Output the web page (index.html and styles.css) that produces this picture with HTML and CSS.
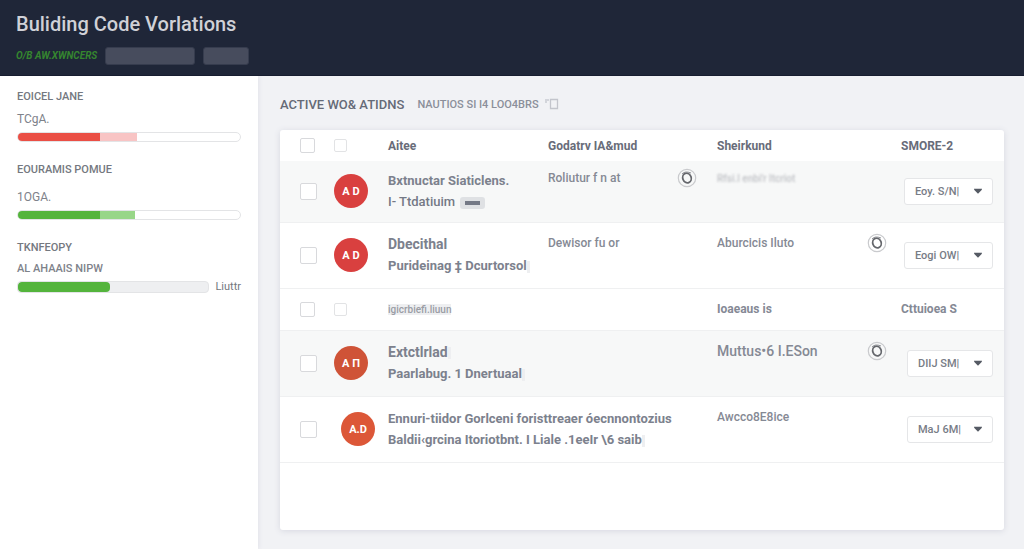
FILE: index.html
```html
<!DOCTYPE html>
<html lang="en">
<head>
<meta charset="utf-8">
<meta name="viewport" content="width=device-width, initial-scale=1">
<title>Buliding Code Vorlations</title>
<link rel="stylesheet" href="styles.css">
</head>
<body>
<svg width="0" height="0" class="sprite" aria-hidden="true">
  <symbol id="ring" viewBox="0 0 20 20">
    <circle cx="10" cy="10" r="8.7" fill="none" stroke="#c9cacd" stroke-width="1.2"/>
    <ellipse cx="10" cy="10" rx="4.2" ry="5" fill="none" stroke="#65676c" stroke-width="1.800" transform="rotate(-20 10 10)"/>
    <path d="M5 6Q8 2.600 14 5" fill="none" stroke="#8d8f94" stroke-width="1"/>
  </symbol>
  <symbol id="caret" viewBox="0 0 10 6">
    <path d="M1 .8H9Q9 1.800 8.200 2.500L5 5.700 1.800 2.500Q1 1.800 1 .8Z" fill="#555a64"/>
  </symbol>
</svg>
<header class="topbar">
  <h1 class="title">Buliding Code Vorlations</h1>
  <div class="subline"><span class="status">O/B AW.XWNCERS</span><span class="pill pill-wide"></span><span class="pill"></span></div>
</header>
<div class="layout">
  <aside class="sidebar">
    <section class="meter">
      <h2 class="meter-title">EOICEL JANE</h2>
      <p class="meter-label">TCgA.</p>
      <div class="bar"><span class="fill red" style="width:37%"></span><span class="fill pink" style="width:16.500%"></span></div>
    </section>
    <section class="meter">
      <h2 class="meter-title">EOURAMIS POMUE</h2>
      <p class="meter-label">1OGA.</p>
      <div class="bar"><span class="fill green" style="width:37%"></span><span class="fill mint" style="width:15.500%"></span></div>
    </section>
    <section class="meter">
      <h2 class="meter-title">TKNFEOPY</h2>
      <p class="meter-label small">AL AHAAIS NIPW</p>
      <div class="bar-row"><div class="bar solid"><span class="fill green round" style="width:48.500%"></span></div><span class="bar-end">Liuttr</span></div>
    </section>
  </aside>
  <main class="main">
    <div class="heading">
      <h2 class="heading-title">ACTIVE WO&amp; ATIDNS</h2>
      <span class="heading-sub">NAUTIOS SI I4 LOO4BRS</span>
      <svg class="heading-icon" viewBox="0 0 14 12" aria-hidden="true"><path d="M1 1v4M3 1v2M5.500 1.500h7v9h-7z" fill="none" stroke="#c3c5cc" stroke-width="1.300"/></svg>
    </div>
    <div class="card">
      <table class="grid">
        <colgroup><col class="c-check"><col class="c-avatar"><col class="c-name"><col class="c-detail"><col><col class="c-action"></colgroup>
        <thead>
          <tr>
            <th><input type="checkbox" class="box" aria-label="Select all"></th>
            <th><input type="checkbox" class="box tiny" aria-label="Select group"></th>
            <th scope="col">Aitee</th>
            <th scope="col">Godatrv IA&amp;mud</th>
            <th scope="col">Sheirkund</th>
            <th scope="col">SMORE-2</th>
          </tr>
        </thead>
        <tbody>
          <tr class="item first shaded">
            <td><input type="checkbox" class="box large" aria-label="Select row 1"></td>
            <td><span class="avatar">A D</span></td>
            <td><div class="name">Bxtnuctar Siaticlens.</div><div class="kind">I- Ttdatiuim <span class="tag"></span></div></td>
            <td class="top"><div class="detail"><span>Roliutur f n at</span><svg class="ring"><use href="#ring"/></svg></div></td>
            <td class="top"><span class="faded">Rfsi.l enbi'r ltcriot</span></td>
            <td class="act"><div class="picker"><select aria-label="Action for row 1"><option>Eoy. S/N|</option></select><svg class="caret"><use href="#caret"/></svg></div></td>
          </tr>
          <tr class="item">
            <td><input type="checkbox" class="box large" aria-label="Select row 2"></td>
            <td><span class="avatar">A D</span></td>
            <td><div class="name big">Dbecithal</div><div class="name">Purideinag ‡ Dcurtorsol<span class="smudge"></span></div></td>
            <td class="top">Dewisor fu or</td>
            <td class="top"><div class="detail near"><span>Aburcicis Iluto</span><svg class="ring"><use href="#ring"/></svg></div></td>
            <td class="act"><div class="picker"><select aria-label="Action for row 2"><option>Eogi OW|</option></select><svg class="caret"><use href="#caret"/></svg></div></td>
          </tr>
          <tr class="group">
            <td><input type="checkbox" class="box" aria-label="Select second group"></td>
            <td><input type="checkbox" class="box tiny" aria-label="Select subgroup"></td>
            <td colspan="2"><span class="ghost">igicrbiefi.liuun</span></td>
            <td>Ioaeaus is</td>
            <td>Cttuioea S</td>
          </tr>
          <tr class="item shaded">
            <td><input type="checkbox" class="box large" aria-label="Select row 3"></td>
            <td><span class="avatar rust">A П</span></td>
            <td><div class="name big">Extctlrlad<span class="smudge"></span></div><div class="name">Paarlabug. 1 Dnertuaal<span class="smudge"></span></div></td>
            <td></td>
            <td class="top"><div class="detail near large-text"><span>Muttus•6 I.ESon</span><svg class="ring"><use href="#ring"/></svg></div></td>
            <td class="act"><div class="picker narrow"><select aria-label="Action for row 3"><option>DIIJ SM|</option></select><svg class="caret"><use href="#caret"/></svg></div></td>
          </tr>
          <tr class="item">
            <td><input type="checkbox" class="box large" aria-label="Select row 4"></td>
            <td><span class="avatar orange">A.D</span></td>
            <td colspan="2"><div class="name">Ennuri-tiidor Gorlceni foristtreaer óecnnontozius</div><div class="name">Baldii‹grcina Itoriotbnt. I Liale .1eeIr \6 saib<span class="smudge"></span></div></td>
            <td class="top">Awcco8E8ice</td>
            <td class="act"><div class="picker narrow"><select aria-label="Action for row 4"><option>MaJ 6M|</option></select><svg class="caret"><use href="#caret"/></svg></div></td>
          </tr>
        </tbody>
      </table>
    </div>
  </main>
</div>
</body>
</html>
```

FILE: styles.css
```css
* { box-sizing: border-box; }
body {
  margin: 0;
  min-height: 100vh;
  display: flex;
  flex-direction: column;
  font-family: Roboto, "Noto Sans", sans-serif;
  font-size: 12px;
  color: #747986;
  background: #f1f2f5;
}
h1, h2, p { margin: 0; }
.sprite { position: absolute; }

.topbar {
  position: relative;
  z-index: 1;
  height: 76px;
  padding: 12px 16px;
  background: #1f2638;
  border-bottom: 1px solid #171d30;
}
.title {
  font-size: 20px;
  line-height: 24px;
  font-weight: 500;
  color: #d0d1d7;
}
.subline { display: flex; align-items: center; gap: 8px; margin-top: 11px; }
.status {
  width: 81px;
  font-size: 10px;
  line-height: 18px;
  font-weight: 700;
  font-style: italic;
  color: #35852f;
  white-space: nowrap;
}
.pill {
  width: 46px;
  height: 18px;
  border-radius: 3px;
  background: #474c5d;
  border: 1px solid #363c4e;
}
.pill-wide { width: 90px; }

.layout { flex: 1; display: flex; }
.sidebar {
  flex: 0 0 258px;
  padding: 13px 17px;
  background: #fff;
  box-shadow: 1px 0 4px #e2e2ea;
}
.meter { margin-bottom: 20px; }
.meter-title { font-size: 11px; line-height: 16px; font-weight: 500; color: #747880; }
.meter-label { font-size: 12px; line-height: 16px; margin: 6px 0 5px; color: #7e828a; }
.meter-label.small { font-size: 11px; margin: 5px 0 4px; font-weight: 500; }
.meter:nth-child(2) .meter-label { margin-top: 11px; }
.bar {
  display: flex;
  height: 10px;
  width: 100%;
  border: 1px solid #e3e4e6;
  border-radius: 5px;
  overflow: hidden;
  background: #fff;
}
.bar.solid { flex: 1; height: 12px; background: #eeeff1; border-radius: 4px; }
.bar-row { display: flex; align-items: center; gap: 6px; }
.bar-end { font-size: 11px; line-height: 12px; color: #747880; }
.fill.red { background: #ea4f45; }
.fill.pink { background: #f8c4c4; }
.fill.green { background: #54b43c; }
.fill.mint { background: #98d688; }
.fill.round { border-radius: 4px; }

.main {
  flex: 1;
  min-width: 0;
  display: flex;
  flex-direction: column;
  padding: 18px 20px 19px 22px;
}
.heading { display: flex; align-items: center; height: 20px; margin-bottom: 16px; }
.heading-title { font-size: 13px; font-weight: 500; color: #656a77; }
.heading-sub { font-size: 11px; font-weight: 500; color: #8b8f9a; margin: 0 6px 0 13px; }
.heading-icon { width: 14px; height: 12px; }
.card {
  flex: 1;
  background: #fff;
  border-radius: 3px;
  box-shadow: 0 1px 6px #d6d7e0;
}
.grid { width: 100%; table-layout: fixed; border-collapse: collapse; }
.c-check, .c-avatar { width: 54px; }
.c-name { width: 160px; }
.c-detail { width: 169px; }
.c-action { width: 103px; }
th, td { padding: 0; text-align: left; vertical-align: middle; white-space: nowrap; }
th { height: 31px; font-size: 12px; font-weight: 700; color: #686c79; }
tr > :first-child { padding-left: 20px; }
tbody tr { border-bottom: 1px solid #eff0f1; }
.item { height: 66px; }
.item.first { height: 61px; }
.shaded { background: #f7f8f8; }
.group { height: 42px; font-weight: 700; color: #858995; }
.box {
  appearance: none;
  display: block;
  width: 15px;
  height: 15px;
  margin: 0;
  border: 1px solid #d8d9dc;
  border-radius: 2px;
  background: #fff;
}
.box.tiny { width: 13px; height: 13px; border-color: #e2e3e5; }
.box.large { width: 17px; height: 17px; }
.avatar {
  display: grid;
  place-items: center;
  width: 34px;
  height: 34px;
  border-radius: 50%;
  background: #d9403f;
  color: #fff;
  font-size: 11px;
  font-weight: 700;
}
.avatar.rust { background: #cf5337; }
.avatar.orange { background: #dc5738; margin-left: 7px; }
.name, .kind { font-size: 13px; line-height: 21px; font-weight: 500; }
.name { font-weight: 700; color: #7c818d; }
.name.big { font-size: 14px; }
.tag {
  display: inline-block;
  vertical-align: middle;
  width: 25px;
  height: 12px;
  margin-left: 2px;
  border: 4px solid #dfe1e4;
  border-width: 4px 5px;
  border-radius: 3px;
  background: #747986;
}
.smudge {
  display: inline-block;
  vertical-align: middle;
  width: 3px;
  height: 12px;
  background: #eeeff1;
}
.top { vertical-align: top; padding-top: 12px; line-height: 16px; font-weight: 500; color: #858994; }
.first .top { padding-top: 9px; }
.detail { display: flex; justify-content: space-between; padding-right: 20px; }
.detail.near { padding-right: 14px; }
.large-text { font-size: 14px; }
.ring { width: 20px; height: 20px; flex: none; margin: -2px 0; }
.faded { font-size: 10px; color: #c0c2c6; filter: blur(1px); }
.ghost { font-size: 10px; font-weight: 500; color: #9a9da5; background: #eeeff1; }
.act { padding-right: 11px; }
.picker { display: grid; align-items: center; width: 89px; margin-left: auto; }
.picker.narrow { width: 86px; }
.picker > * { grid-area: 1 / 1; }
.picker select {
  appearance: none;
  width: 100%;
  height: 27px;
  padding: 0 0 0 10px;
  border: 1px solid #e5e6e8;
  border-radius: 3px;
  background: #fff;
  font: 500 11px Roboto, sans-serif;
  color: #787c86;
}
.caret { width: 10px; height: 6px; justify-self: end; margin-right: 10px; pointer-events: none; }
```
